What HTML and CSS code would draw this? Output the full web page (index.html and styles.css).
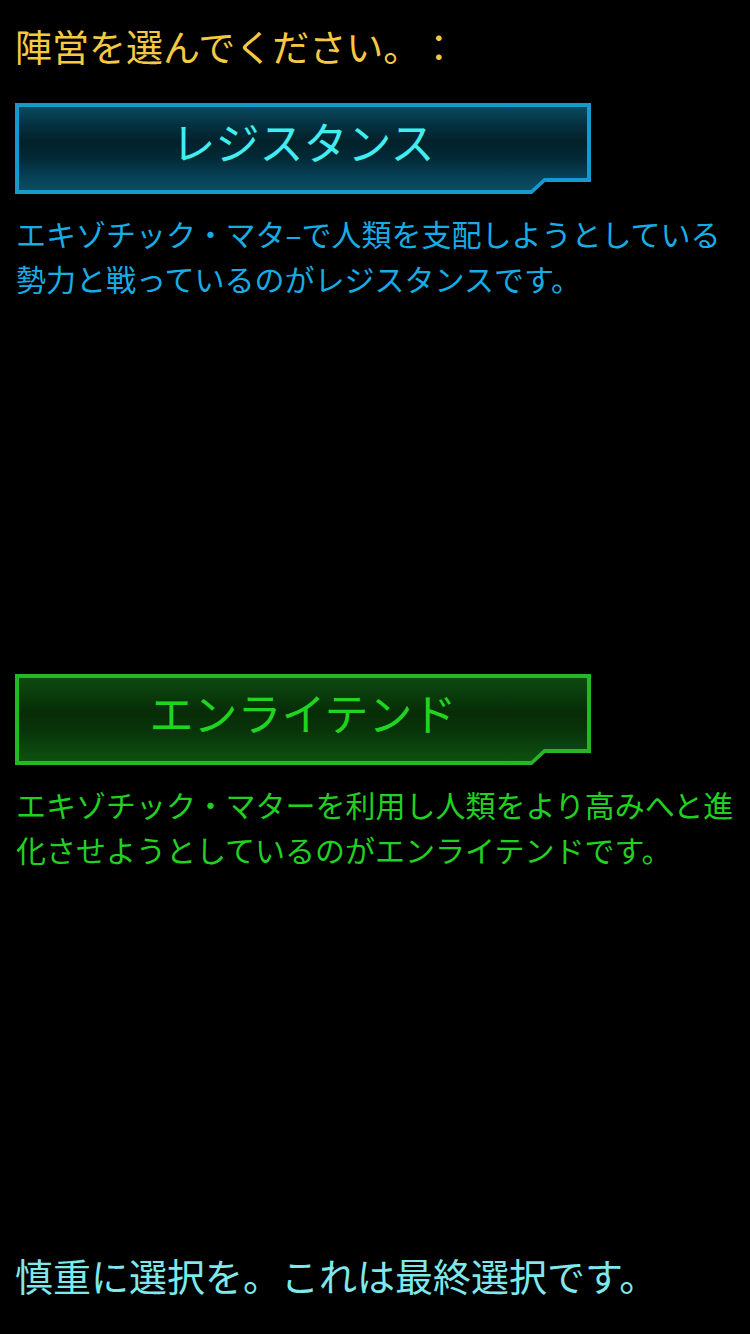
FILE: index.html
```html
<!DOCTYPE html>
<html lang="ja">
<head>
<meta charset="utf-8">
<title>陣営選択</title>
<link rel="stylesheet" href="styles.css">
</head>
<body>
<main class="page">
  <h1 class="title">陣営を選んでください。：</h1>

  <section class="faction faction-res">
    <div class="plate">
      <div class="plate-inner">
        <span class="plate-label">レジスタンス</span>
      </div>
    </div>
    <p class="desc">エキゾチック・マタ–で人類を支配しようとしている<br>勢力と戦っているのがレジスタンスです。</p>
  </section>

  <section class="faction faction-enl">
    <div class="plate">
      <div class="plate-inner">
        <span class="plate-label">エンライテンド</span>
      </div>
    </div>
    <p class="desc">エキゾチック・マターを利用し人類をより高みへと進<br>化させようとしているのがエンライテンドです。</p>
  </section>

  <p class="footer">慎重に選択を。これは最終選択です。</p>
</main>
</body>
</html>
```

FILE: styles.css
```css
html, body {
  margin: 0;
  padding: 0;
  background: #000;
}

body {
  width: 750px;
  height: 1334px;
  overflow: hidden;
  font-family: "Noto Sans CJK JP", "Noto Sans", sans-serif;
  font-weight: 400;
  text-spacing-trim: space-all;
}

.page {
  padding: 0 15px;
  display: flex;
  flex-direction: column;
}

.title {
  margin: 21px 0 0 0;
  font-size: 37px;
  line-height: 50px;
  font-weight: 400;
  color: #f6c944;
  white-space: nowrap;
}

.faction {
  display: flex;
  flex-direction: column;
}

.faction-res {
  margin-top: 32px;
}

.faction-enl {
  margin-top: 373px;
}

.plate {
  width: 576px;
  height: 91px;
  padding: 4px;
  box-sizing: border-box;
  clip-path: polygon(0 0, 100% 0, 100% 79px, 530px 79px, 517px 100%, 0 100%);
}

.plate-inner {
  width: 100%;
  height: 100%;
  display: flex;
  align-items: flex-start;
  justify-content: center;
  clip-path: polygon(0 0, 100% 0, 100% 71px, 525px 71px, 512px 100%, 0 100%);
}

.plate-label {
  font-size: 44px;
  line-height: 68px;
  white-space: nowrap;
}

.faction-res .plate {
  background: #1699cf;
}

.faction-res .plate-inner {
  background: linear-gradient(to bottom, #0a4a5f 0%, #04303f 22%, #02212b 42%, #032a37 62%, #064257 85%, #0a4d64 100%);
}

.faction-res .plate-label {
  color: #40eef0;
}

.faction-enl .plate {
  background: #24b824;
}

.faction-enl .plate-inner {
  background: linear-gradient(to bottom, #0e4a10 0%, #0a3a0b 22%, #072c07 42%, #08330a 62%, #0c450e 85%, #0f5011 100%);
}

.faction-enl .plate-label {
  color: #1fd51f;
}

.desc {
  margin: 17px 0 0 0;
  font-size: 30px;
  line-height: 45px;
  white-space: nowrap;
  padding-left: 1px;
}

.faction-res .desc {
  color: #17ade4;
}

.faction-enl .desc {
  color: #22d022;
}

.footer {
  margin: 378px 0 0 0;
  font-size: 38px;
  line-height: 50px;
  color: #7ee8ea;
  white-space: nowrap;
}
```
